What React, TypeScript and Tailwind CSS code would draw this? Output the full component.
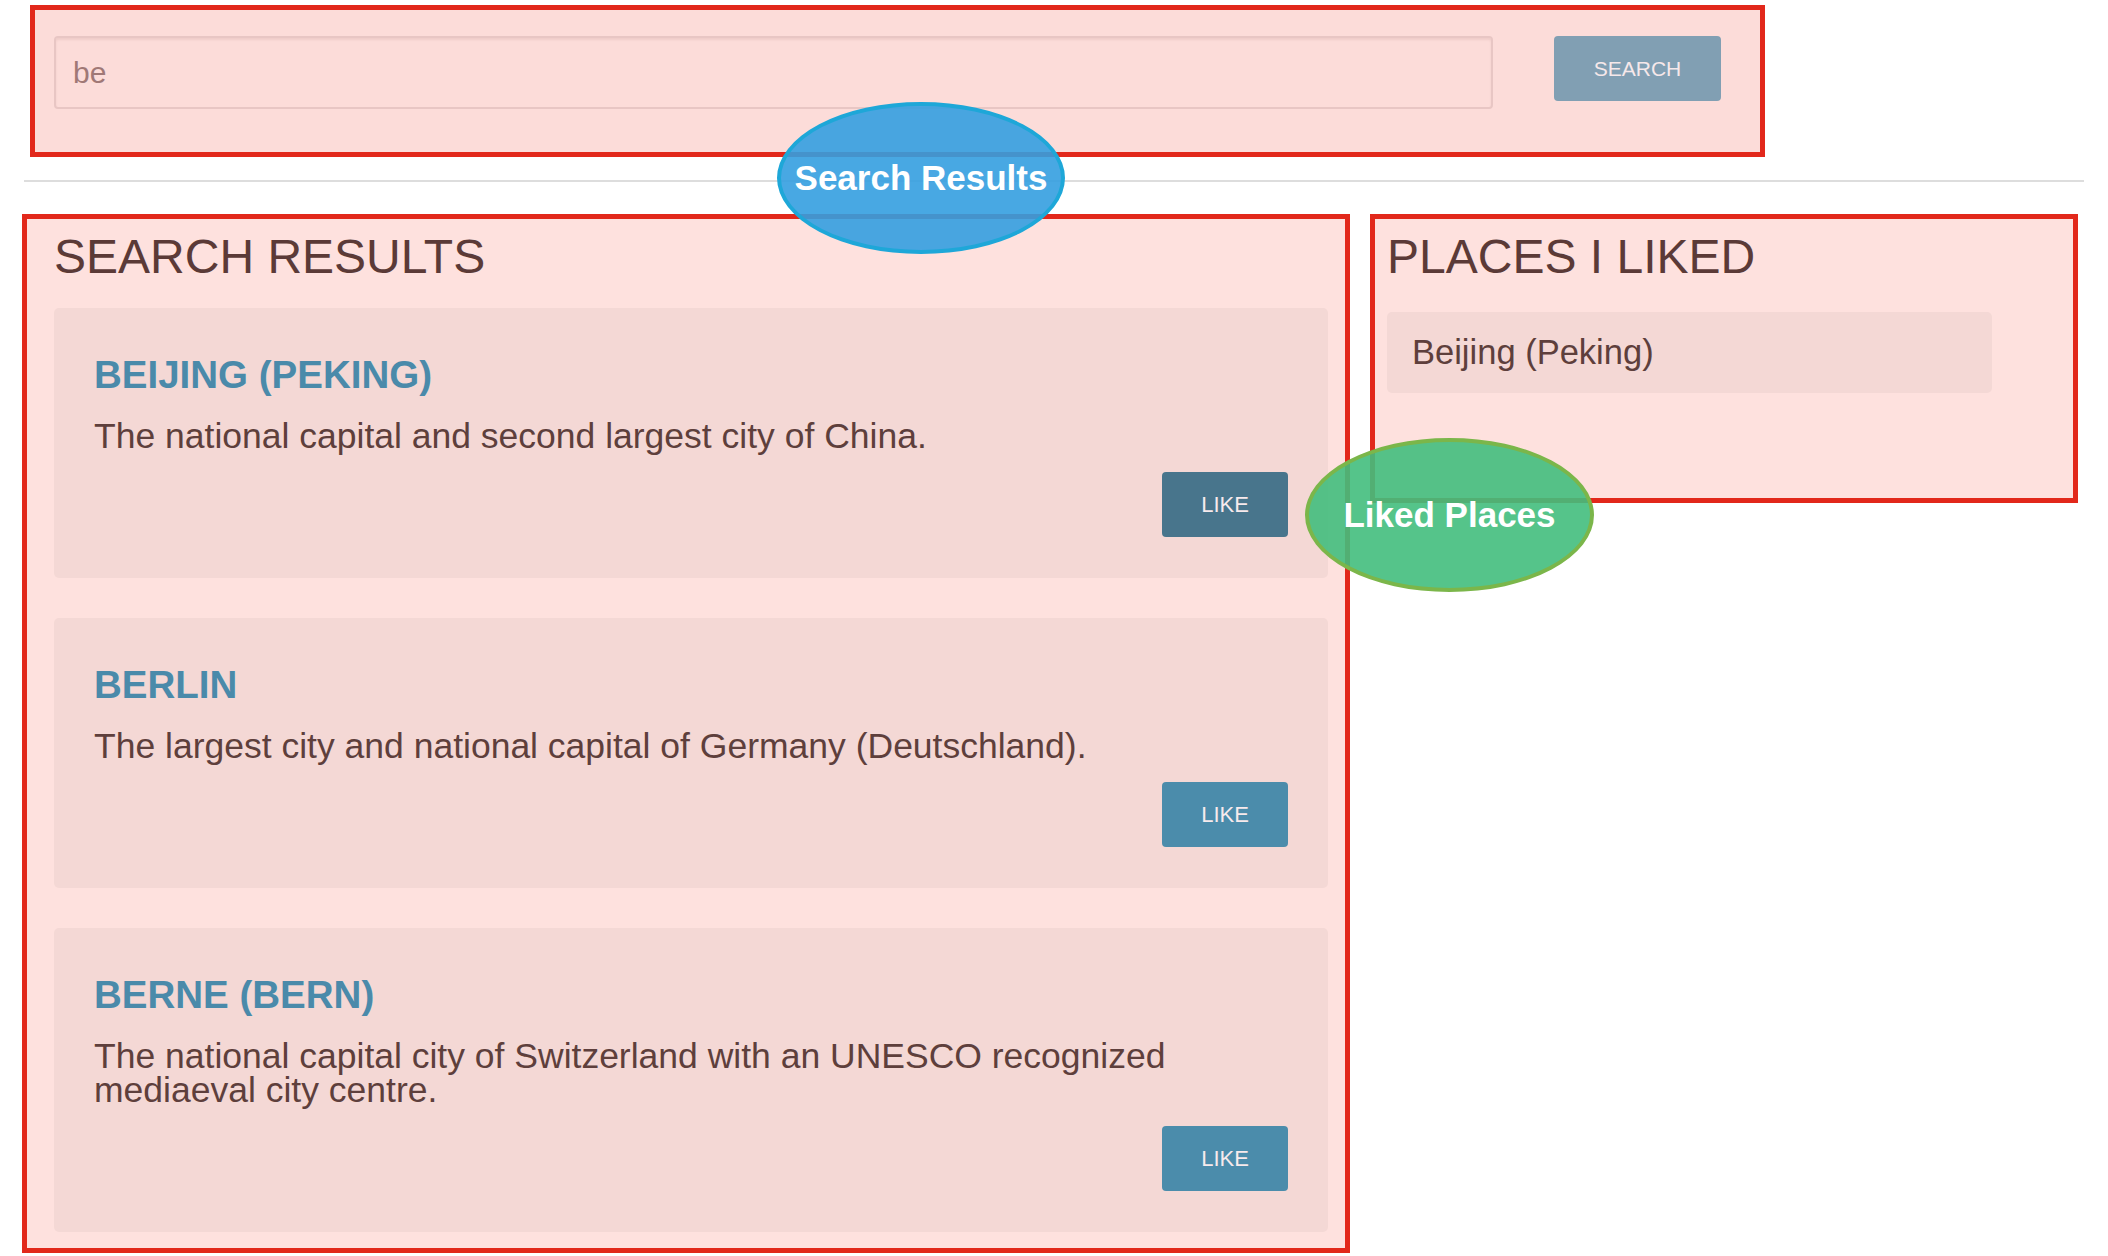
import React from "react";

type Place = { title: string; desc: string; dark?: boolean };

const places: Place[] = [
  { title: "BEIJING (PEKING)", desc: "The national capital and second largest city of China.", dark: true },
  { title: "BERLIN", desc: "The largest city and national capital of Germany (Deutschland)." },
  {
    title: "BERNE (BERN)",
    desc: "The national capital city of Switzerland with an UNESCO recognized mediaeval city centre.",
  },
];

function Card({ p }: { p: Place }) {
  return (
    <div className="rounded-[5px] bg-[#f4d8d5] pl-[40px] pr-[40px] pt-[45px] pb-[41px]">
      <div className="text-[38.5px] leading-[44px] font-bold text-[#4a8aaa]">{p.title}</div>
      <div className="mt-[22px] text-[35.5px] leading-[34px] text-[#5e3f3c]">{p.desc}</div>
      <div className="mt-[19px] flex justify-end">
        <div
          className={
            "flex h-[65px] w-[126px] items-center justify-center rounded-[4px] text-[22px] text-[#f7eaec] " +
            (p.dark ? "bg-[#48758c]" : "bg-[#4b8cab]")
          }
        >
          LIKE
        </div>
      </div>
    </div>
  );
}

export default function App() {
  return (
    <div className="relative h-[1256px] w-[2108px] overflow-hidden bg-white font-['Liberation_Sans',Arial,sans-serif]">
      {/* search bar */}
      <div className="ml-[30px] mt-[5px] flex h-[152px] w-[1735px] items-start border-[5px] border-[#e2281b] bg-[#fcdcd9] pl-[19px] pr-[39px] pt-[26px]">
        <div className="flex h-[73px] w-[1439px] items-center rounded-[4px] border-2 border-[#e8c6c4] bg-[#fcdcd9] pl-[17px] text-[30px] text-[#a07876] shadow-[inset_0_2px_2px_rgba(150,90,90,0.12)]">
          be
        </div>
        <div className="ml-auto flex h-[65px] w-[167px] items-center justify-center rounded-[4px] bg-[#819fb3] text-[21px] text-[#f6e8ea]">
          SEARCH
        </div>
      </div>

      {/* divider */}
      <div className="ml-[24px] mt-[23px] h-[2px] w-[2060px] bg-[#dddddd]" />

      {/* main row */}
      <div className="mt-[32px] flex items-start">
        <div className="ml-[22px] w-[1328px] border-[5px] border-[#e2281b] bg-[#fee1de] pb-[16px] pl-[27px] pr-[17px] pt-[12px]">
          <div className="text-[48px] leading-[52px] text-[#5b3a37]">SEARCH RESULTS</div>
          <div className="mt-[25px] flex flex-col gap-[40px]">
            {places.map((p) => (
              <Card key={p.title} p={p} />
            ))}
          </div>
        </div>

        <div className="ml-[20px] h-[289px] w-[708px] border-[5px] border-[#e2281b] bg-[#fee1de] pl-[12px] pt-[12px]">
          <div className="text-[48px] leading-[52px] text-[#5b3a37]">PLACES I LIKED</div>
          <div className="mt-[29px] flex h-[81px] w-[605px] items-center rounded-[5px] bg-[#f4d8d5] pl-[25px] text-[34.5px] text-[#5e3f3c]">
            Beijing (Peking)
          </div>
        </div>
      </div>

      {/* annotation bubbles */}
      <div className="absolute left-[777px] top-[102px] flex h-[152px] w-[288px] items-center justify-center rounded-[50%] border-4 border-[#1ea7d8] bg-[rgba(52,158,224,0.9)] text-[35px] font-bold text-white">
        Search Results
      </div>
      <div className="absolute left-[1305px] top-[438px] flex h-[154px] w-[289px] items-center justify-center rounded-[50%] border-4 border-[#7bb64a] bg-[rgba(66,190,125,0.9)] text-[35px] font-bold text-white">
        Liked Places
      </div>
    </div>
  );
}
